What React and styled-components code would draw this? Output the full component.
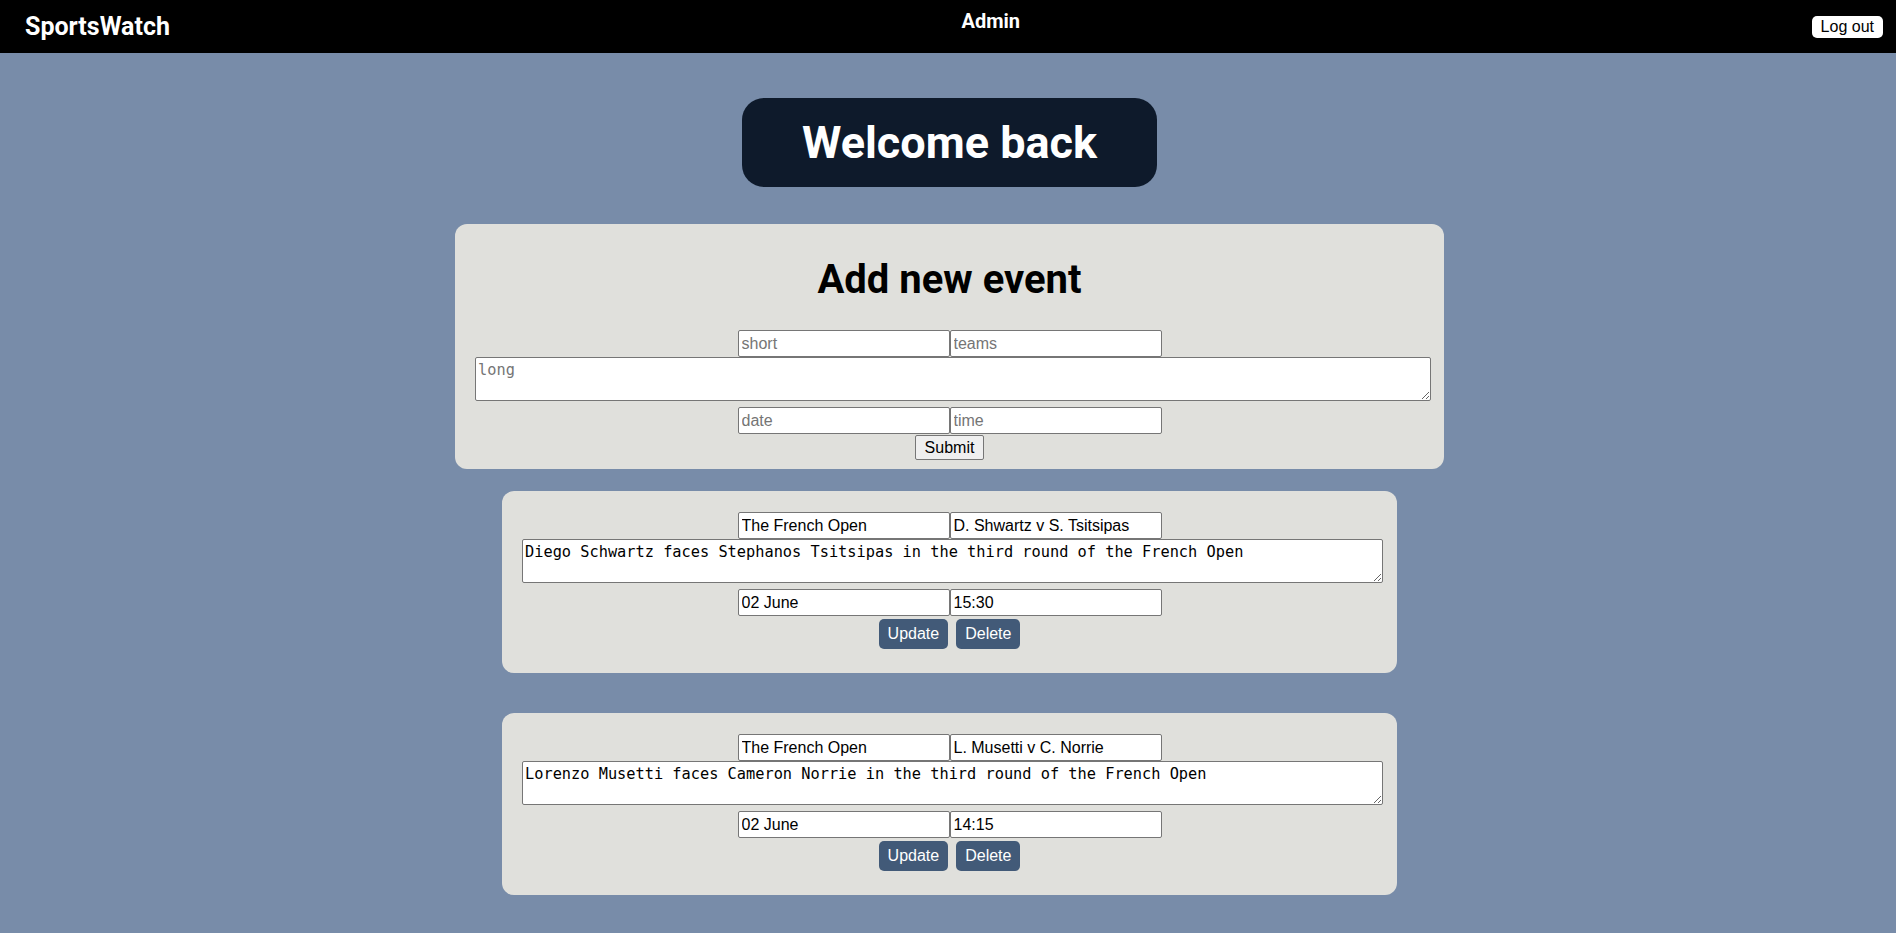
import React from "react";
import styled, { createGlobalStyle } from "styled-components";

const GlobalStyle = createGlobalStyle`
  html, body {
    margin: 0;
    padding: 0;
    background: #788ca9;
    font-family: "Liberation Sans", Arial, sans-serif;
  }
  * { box-sizing: border-box; }
`;

const Header = styled.header`
  height: 53px;
  background: #000;
  display: flex;
  align-items: center;
  justify-content: space-between;
  padding: 0 13px 0 25px;
`;

const Brand = styled.div`
  font-family: Roboto, "Noto Sans", sans-serif;
  font-weight: 700;
  font-size: 25px;
  color: #fff;
`;

const Role = styled.div`
  align-self: flex-start;
  margin-top: 9px;
  font-family: Roboto, "Noto Sans", sans-serif;
  font-weight: 700;
  font-size: 20px;
  color: #fff;
`;

const LogoutButton = styled.button`
  height: 22px;
  padding: 0 9px;
  border: none;
  border-radius: 5px;
  background: #fff;
  color: #000;
  font-family: "Liberation Sans", Arial, sans-serif;
  font-size: 16px;
  line-height: 22px;
  cursor: pointer;
`;

const Main = styled.main`
  display: flex;
  flex-direction: column;
  align-items: center;
  padding: 45px 0 40px 3px;
`;

const Welcome = styled.h1`
  margin: 0 0 37px;
  width: 415px;
  padding: 16px 0;
  background: #0e1a2b;
  border-radius: 22px;
  color: #fff;
  text-align: center;
  font-family: Roboto, "Noto Sans", sans-serif;
  font-weight: 700;
  font-size: 45px;
  line-height: 57px;
`;

const Card = styled.section`
  width: ${(p) => (p.$wide ? "989px" : "895px")};
  margin-bottom: ${(p) => p.$after || 0}px;
  padding: ${(p) => p.$pad};
  background: #e0e0dc;
  border-radius: 12px;
  display: flex;
  flex-direction: column;
  align-items: center;
`;

const Title = styled.h2`
  margin: 0 0 27px;
  font-family: Roboto, "Noto Sans", sans-serif;
  font-weight: 700;
  font-size: 40px;
  line-height: 47px;
  color: #000;
`;

const FieldRow = styled.div`
  display: flex;
  margin-bottom: ${(p) => p.$after || 0}px;
`;

const Field = styled.input`
  width: 212px;
  height: 27px;
  margin: 0;
  padding: 1px 3px;
  border: 1px solid #767676;
  border-radius: 2px;
  background: #fff;
  color: #000;
  font-family: "Liberation Sans", Arial, sans-serif;
  font-size: 16px;
  &::placeholder { color: #757575; }
`;

const LongField = styled.textarea`
  align-self: flex-start;
  width: ${(p) => (p.$wide ? "956px" : "861px")};
  height: 44px;
  margin: 0 0 6px;
  padding: 4px 2px 2px;
  border: 1px solid #767676;
  border-radius: 2px;
  background: #fff;
  color: #000;
  font-family: "DejaVu Sans Mono", monospace;
  font-size: 15.3px;
  line-height: 17px;
  resize: vertical;
  &::placeholder { color: #757575; }
`;

const SubmitButton = styled.button`
  margin-top: 1px;
  height: 25px;
  padding: 0 9px;
  border: 1px solid #767676;
  border-radius: 2px;
  background: #efefef;
  color: #000;
  font-family: "Liberation Sans", Arial, sans-serif;
  font-size: 16px;
`;

const Actions = styled.div`
  display: flex;
  gap: 8px;
  margin-top: 3px;
`;

const ActionButton = styled.button`
  height: 30px;
  padding: 0 9px;
  border: none;
  border-radius: 5px;
  background: #425a78;
  color: #fff;
  font-family: "Liberation Sans", Arial, sans-serif;
  font-size: 16px;
  cursor: pointer;
`;

const events = [
  {
    short: "The French Open",
    teams: "D. Shwartz v S. Tsitsipas",
    long: "Diego Schwartz faces Stephanos Tsitsipas in the third round of the French Open",
    date: "02 June",
    time: "15:30",
  },
  {
    short: "The French Open",
    teams: "L. Musetti v C. Norrie",
    long: "Lorenzo Musetti faces Cameron Norrie in the third round of the French Open",
    date: "02 June",
    time: "14:15",
  },
];

export default function App() {
  return (
    <>
      <GlobalStyle />
      <Header>
        <Brand>SportsWatch</Brand>
        <Role>Admin</Role>
        <LogoutButton>Log out</LogoutButton>
      </Header>
      <Main>
        <Welcome>Welcome back</Welcome>
        <Card $wide $pad="32px 20px 9px" $after={22}>
          <Title>Add new event</Title>
          <FieldRow>
            <Field placeholder="short" />
            <Field placeholder="teams" />
          </FieldRow>
          <LongField $wide placeholder="long" />
          <FieldRow>
            <Field placeholder="date" />
            <Field placeholder="time" />
          </FieldRow>
          <SubmitButton>Submit</SubmitButton>
        </Card>
        {events.map((ev, i) => (
          <Card key={i} $pad="21px 20px 24px" $after={40}>
            <FieldRow>
              <Field defaultValue={ev.short} />
              <Field defaultValue={ev.teams} />
            </FieldRow>
            <LongField defaultValue={ev.long} />
            <FieldRow>
              <Field defaultValue={ev.date} />
              <Field defaultValue={ev.time} />
            </FieldRow>
            <Actions>
              <ActionButton>Update</ActionButton>
              <ActionButton>Delete</ActionButton>
            </Actions>
          </Card>
        ))}
      </Main>
    </>
  );
}
